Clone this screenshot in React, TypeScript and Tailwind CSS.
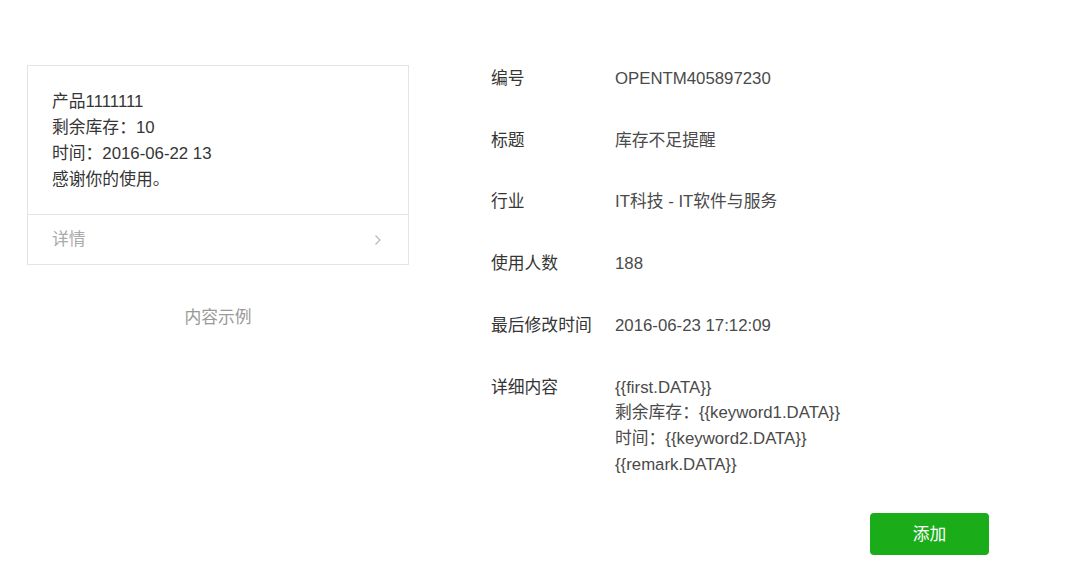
import React from 'react';

const rows = [
  { label: '编号', value: ['OPENTM405897230'] },
  { label: '标题', value: ['库存不足提醒'] },
  { label: '行业', value: ['IT科技 - IT软件与服务'] },
  { label: '使用人数', value: ['188'] },
  { label: '最后修改时间', value: ['2016-06-23 17:12:09'] },
  {
    label: '详细内容',
    value: ['{{first.DATA}}', '剩余库存：{{keyword1.DATA}}', '时间：{{keyword2.DATA}}', '{{remark.DATA}}'],
  },
];

export default function App() {
  return (
    <div
      className="min-h-screen bg-white text-[#353535] text-[16.8px]"
      style={{ fontFamily: '"Liberation Sans", "Noto Sans CJK SC", sans-serif' }}
    >
      <div className="flex pt-[65px] pl-[27px]">
        {/* 示例卡片 */}
        <div className="w-[382px] shrink-0">
          <div className="border border-[#e4e4e4]">
            <div className="px-[24px] pt-[23px] pb-[21px] leading-[26px]">
              <p>产品1111111</p>
              <p>剩余库存：10</p>
              <p>时间：2016-06-22 13</p>
              <p>感谢你的使用。</p>
            </div>
            <div className="border-t border-[#e4e4e4] h-[50px] px-[24px] flex items-center justify-between text-[#aaa]">
              <span>详情</span>
              <svg width="8" height="12" viewBox="0 0 8 12" className="mr-[2px]">
                <path d="M1.5 1.5 L6 6 L1.5 10.5" fill="none" stroke="#b8b8b8" strokeWidth="1.2" />
              </svg>
            </div>
          </div>
          <p className="text-center text-[#999] mt-[40px]">内容示例</p>
        </div>

        {/* 模板信息 */}
        <div className="ml-[82px] w-[498px] pt-[1px]">
          {rows.map((r) => (
            <div key={r.label} className="flex leading-[25.7px] mb-[36px] last:mb-0">
              <div className="w-[124px] shrink-0 text-[#353535]">{r.label}</div>
              <div className="text-[#4a4a4a]">
                {r.value.map((v) => (
                  <p key={v}>{v}</p>
                ))}
              </div>
            </div>
          ))}
          <div className="flex justify-end mt-[36px]">
            <button className="w-[119px] h-[42px] rounded-[4px] bg-[#1aad19] text-white">添加</button>
          </div>
        </div>
      </div>
    </div>
  );
}
